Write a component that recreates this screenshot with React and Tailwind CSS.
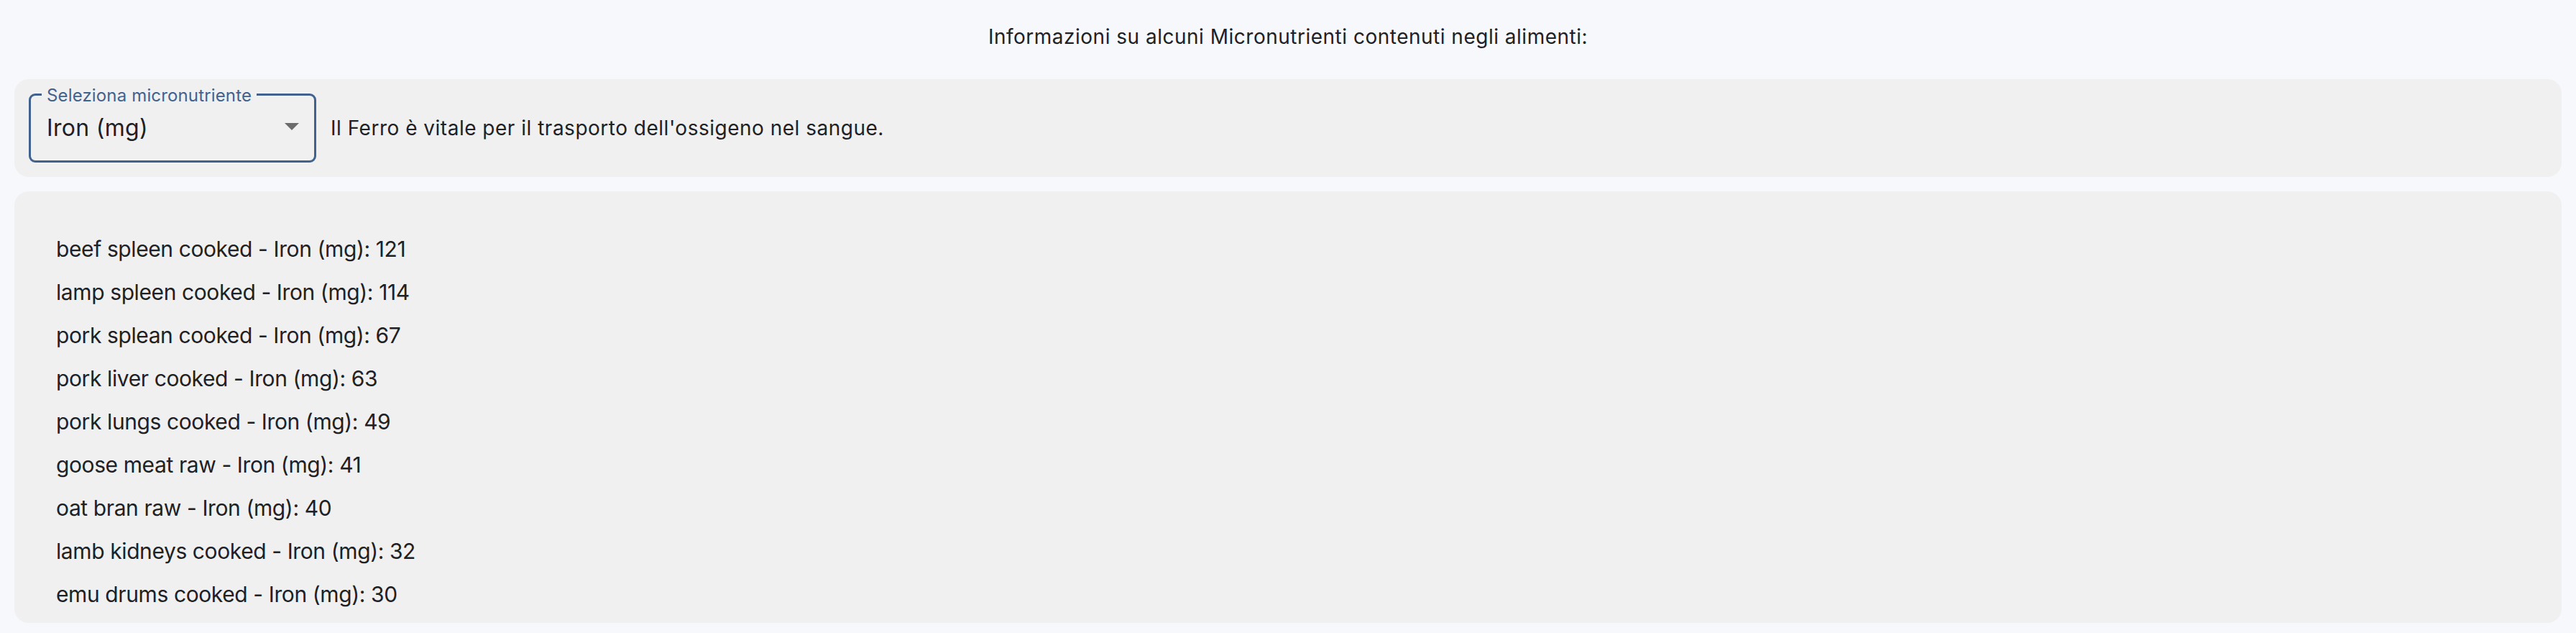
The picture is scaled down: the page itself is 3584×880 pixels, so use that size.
const foods = [
  { name: "beef spleen cooked", value: 121 },
  { name: "lamp spleen cooked", value: 114 },
  { name: "pork splean cooked", value: 67 },
  { name: "pork liver cooked", value: 63 },
  { name: "pork lungs cooked", value: 49 },
  { name: "goose meat raw", value: 41 },
  { name: "oat bran raw", value: 40 },
  { name: "lamb kidneys cooked", value: 32 },
  { name: "emu drums cooked", value: 30 },
];

function NutrientSelect() {
  return (
    <div className="relative flex h-[96px] w-[400px] shrink-0 items-center justify-between rounded-[9px] border-[3px] border-[#41628f] pl-[22px] pr-[21px]">
      <span className="absolute left-[15px] top-0 -translate-y-1/2 bg-[#f0f0f0] px-[7px] text-[24px] leading-[28px] tracking-[0.15px] text-[#41628f]">
        Seleziona micronutriente
      </span>
      <span className="text-[32px] leading-[40px] tracking-[0.3px] text-[#1f2023]">Iron (mg)</span>
      <svg width="20" height="10" viewBox="0 0 20 10" className="mt-[-4px]">
        <path d="M0 0l10 10 10-10z" fill="#6b6b6b" />
      </svg>
    </div>
  );
}

export default function App() {
  return (
    <div className="min-h-screen bg-[#f7f8fc] font-['Inter','Liberation_Sans',sans-serif] text-[#202124]">
      <header className="h-[110px] pt-[30px] text-center text-[28px] leading-[42px] tracking-[0.5px]">
        Informazioni su alcuni Micronutrienti contenuti negli alimenti:
      </header>

      <div className="mx-[20px] flex flex-col gap-[20px]">
        <section className="flex items-center gap-[20px] rounded-[20px] bg-[#f0f0f0] p-[20px]">
          <NutrientSelect />
          <p className="text-[28px] leading-[40px] tracking-[0.5px]">
            Il Ferro è vitale per il trasporto dell'ossigeno nel sangue.
          </p>
        </section>

        <section className="h-[600px] overflow-hidden rounded-[20px] bg-[#f0f0f0] pl-[58px] pt-[50px]">
          <ul>
            {foods.map((f) => (
              <li key={f.name} className="text-[30px] leading-[60px] tracking-[-0.4px]">
                {f.name} - Iron (mg): {f.value}
              </li>
            ))}
          </ul>
        </section>
      </div>
    </div>
  );
}
